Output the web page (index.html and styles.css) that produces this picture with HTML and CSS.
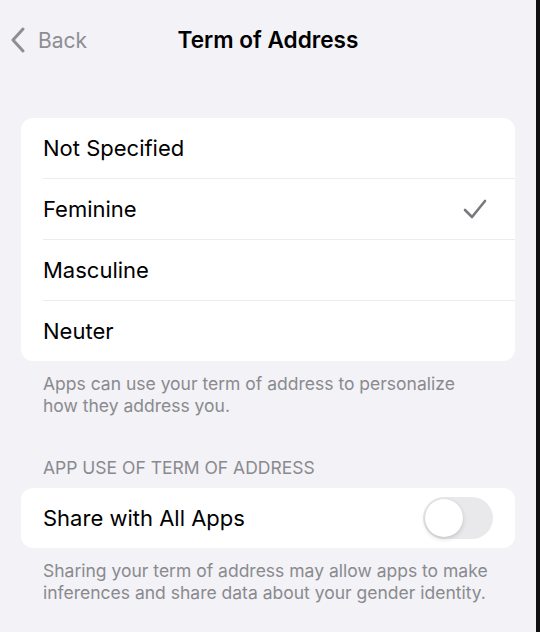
FILE: index.html
```html
<!DOCTYPE html>
<html>
<head>
<meta charset="utf-8">
<link rel="stylesheet" href="styles.css">
</head>
<body>
<div class="screen">
  <header class="nav">
    <div class="back">
      <svg class="chev" width="16" height="26" viewBox="0 0 16 26"><path d="M13 2 L3 13 L13 24" fill="none" stroke="#8e8e93" stroke-width="3" stroke-linecap="round" stroke-linejoin="round"/></svg>
      <span>Back</span>
    </div>
    <div class="title">Term of Address</div>
  </header>

  <section class="group">
    <div class="row"><span>Not Specified</span></div>
    <div class="row"><span>Feminine</span>
      <svg class="check" width="24" height="22" viewBox="0 0 24 22"><path d="M2 12 L9 19 L22 3" fill="none" stroke="#78787d" stroke-width="2.6" stroke-linecap="round" stroke-linejoin="round"/></svg>
    </div>
    <div class="row"><span>Masculine</span></div>
    <div class="row"><span>Neuter</span></div>
  </section>
  <p class="foot foot-narrow">Apps can use your term of address to personalize how they address you.</p>

  <h2 class="head">APP USE OF TERM OF ADDRESS</h2>
  <section class="group">
    <div class="row"><span>Share with All Apps</span><div class="toggle"><div class="knob"></div></div></div>
  </section>
  <p class="foot foot-wide">Sharing your term of address may allow apps to make inferences and share data about your gender identity.</p>
</div>
</body>
</html>
```
FILE: styles.css
```css
html, body { margin: 0; padding: 0; }
body {
  width: 540px; height: 632px; overflow: hidden;
  font-family: Inter, "Noto Sans", sans-serif;
  background: #111;
}
.screen {
  width: 536px; height: 632px;
  background: #f2f2f7;
  box-sizing: border-box;
}
.nav {
  height: 78px;
  display: flex; align-items: center; justify-content: center;
  position: relative;
}
.back {
  position: absolute; left: 10px; top: 27px;
  display: flex; align-items: center; gap: 12px;
  color: #8e8e93; font-size: 21px;
}
.title { font-size: 22.6px; font-weight: 600; color: #000; }
.group {
  margin: 40px 21px 0;
  background: #fff; border-radius: 12px;
  overflow: hidden;
}
.row {
  height: 60px; margin-left: 22px; padding-right: 28px;
  display: flex; align-items: center; justify-content: space-between;
  font-size: 22px; color: #000;
  border-bottom: 1px solid #ebebf0;
}
.row:last-child { border-bottom: 0; }
.foot {
  margin: 0; padding: 12px 0 0 43px;
  font-size: 17.5px; line-height: 22px; color: #8a8a8e;
}
.foot-narrow { width: 420px; }
.foot-wide { width: 456px; }
.head {
  margin: 40px 0 9px; padding-left: 43px;
  font-size: 17.5px; line-height: 22px; font-weight: 400; color: #8a8a8e;
}
.head + .group { margin-top: 0; }
.toggle {
  width: 70px; height: 42px; border-radius: 21px;
  background: #e9e9eb; margin-right: -6px;
  position: relative;
}
.knob {
  position: absolute; left: 2px; top: 2px;
  width: 38px; height: 38px; border-radius: 50%;
  background: #fff; box-shadow: 0 2px 5px rgba(0,0,0,0.15), 0 0 1px rgba(0,0,0,0.1);
}
```
